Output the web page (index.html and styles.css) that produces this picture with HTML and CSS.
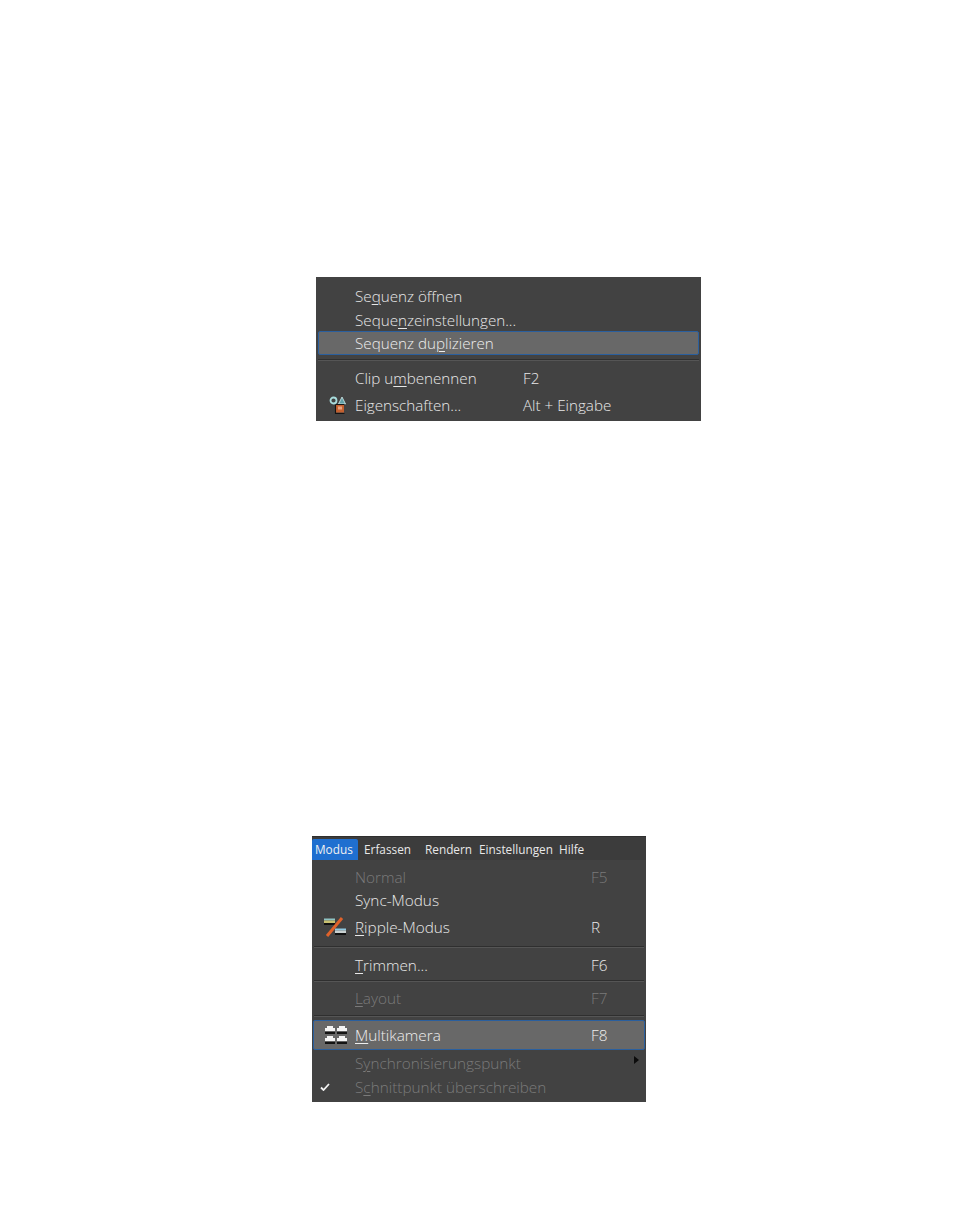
FILE: index.html
```html
<!DOCTYPE html>
<html lang="de">
<head>
<meta charset="utf-8">
<title>Menüs</title>
<link rel="stylesheet" href="styles.css">
</head>
<body>
<div class="page">
  <div class="menu menu-seq">
    <div class="row h24"><span class="ic"></span><span class="lb">Se<u>q</u>uenz öffnen</span></div>
    <div class="row h23"><span class="ic"></span><span class="lb">Seque<u>n</u>zeinstellungen...</span></div>
    <div class="row h24 hot"><span class="ic"></span><span class="lb">Sequenz du<u>p</u>lizieren</span></div>
    <div class="sep s-a"></div>
    <div class="row h27"><span class="ic"></span><span class="lb">Clip u<u>m</u>benennen</span><span class="key">F2</span></div>
    <div class="row h28"><span class="ic">
      <svg class="icon-prop" width="18" height="18" viewBox="0 0 18 18"><circle cx="4.500" cy="4.500" r="3" fill="none" stroke="#a8dcdc" stroke-width="1.800"/><path d="M9.500 8 13 1 16.500 8z" fill="#5f9ea6" stroke="#d6eeee" stroke-width=".8"/><rect x="7" y="9" width="8" height="7.500" fill="#c4602f"/><rect x="9" y="10.500" width="4" height="3" fill="#e9a27e"/><path d="M6.500 8.500h9M6.500 9v8.500h9" fill="none" stroke="#141414" stroke-width="1.100"/></svg>
    </span><span class="lb">Ei<u>g</u>enschaften...</span><span class="key">Alt + Eingabe</span></div>
  </div>

  <div class="menu menu-mode">
    <div class="bar">
      <span class="bar-item active">Modus</span>
      <span class="bar-item erf">Erfassen</span>
      <span class="bar-item ren">Rendern</span>
      <span class="bar-item ein">Einstellungen</span>
      <span class="bar-item hil">Hilfe</span>
    </div>
    <div class="body">
      <div class="row h23 off"><span class="ic"></span><span class="lb">Normal</span><span class="key">F5</span></div>
      <div class="row h23"><span class="ic"></span><span class="lb">Sync-Modus</span></div>
      <div class="row h31"><span class="ic">
        <svg class="icon-rip" width="24" height="20" viewBox="0 0 24 20"><rect x="1" y="1.500" width="11" height="2" fill="#8fc4c4"/><rect x="1" y="3.500" width="11" height="2.500" fill="#c8c070"/><rect x="1" y="6" width="11" height="2" fill="#111"/><rect x="12" y="11.500" width="11" height="2" fill="#8fc8e0"/><rect x="12" y="13.500" width="11" height="2.500" fill="#c8d0d0"/><rect x="12" y="16" width="11" height="2" fill="#111"/><path d="M19 1 4 19" stroke="#e0622a" stroke-width="3"/></svg>
      </span><span class="lb"><u>R</u>ipple-Modus</span><span class="key">R</span></div>
      <div class="sep s-b"></div>
      <div class="row h30"><span class="ic"></span><span class="lb"><u>T</u>rimmen...</span><span class="key">F6</span></div>
      <div class="sep s-c"></div>
      <div class="row h31 off"><span class="ic"></span><span class="lb"><u>L</u>ayout</span><span class="key">F7</span></div>
      <div class="sep s-d"></div>
      <div class="row h30 hot wide"><span class="ic">
        <svg class="icon-cam" width="25" height="20" viewBox="0 0 25 20"><path d="M3 1h6v2H3zM1 3h10v3.500H1z" fill="#f4f4f4"/><rect x="1" y="6.500" width="10" height="2.500" fill="#141414"/><path d="M15 1h6v2h-6zM13 3h10v3.500H13z" fill="#f4f4f4"/><rect x="13" y="6.500" width="10" height="2.500" fill="#141414"/><path d="M3 11h6v2H3zM1 13h10v3.500H1z" fill="#f4f4f4"/><rect x="1" y="16.500" width="10" height="2.500" fill="#141414"/><path d="M15 11h6v2h-6zM13 13h10v3.500H13z" fill="#f4f4f4"/><rect x="13" y="16.500" width="10" height="2.500" fill="#141414"/></svg>
      </span><span class="lb"><u>M</u>ultikamera</span><span class="key">F8</span></div>
      <div class="row h25 off"><span class="ic"></span><span class="lb">S<u>y</u>nchronisierungspunkt</span><span class="sub"></span></div>
      <div class="row h24 off"><span class="ic"><svg class="icon-chk" width="10" height="8" viewBox="0 0 10 8"><path d="M1 4.500 3.500 7 9 1" fill="none" stroke="#f2f2f2" stroke-width="1.800"/></svg></span><span class="lb">S<u>c</u>hnittpunkt überschreiben</span></div>
    </div>
  </div>
</div>
</body>
</html>
```

FILE: styles.css
```css
html, body { margin: 0; padding: 0; background: #fff; }
.page {
  width: 954px;
  height: 1227px;
  padding-top: 277px;
  box-sizing: border-box;
  font-family: "Open Sans", "DejaVu Sans", sans-serif;
  font-weight: 300;
  overflow: hidden;
}
.menu { background: #424242; color: #e8e8e8; font-size: 15.2px; box-sizing: border-box; }
.menu-seq { width: 385px; height: 144px; margin-left: 316px; padding-top: 7px; --key: 168px; --ic: 39px; margin-bottom: 415px; }
.menu-mode { width: 334px; height: 266px; margin-left: 312px; --key: 236px; --ic: 43px; border-top: 1px solid #2e2e2e; font-size: 15.3px; }

.bar { height: 23px; display: flex; align-items: center; background: #3c3c3c; font-size: 11.8px; font-weight: 400; }
.bar-item { line-height: 21px; white-space: nowrap; padding-top: 1px; }
.active { width: 46px; height: 21px; margin-top: 2px; padding: 0 0 0 3px; box-sizing: border-box; background: #1f6fd0; color: #f0f0f0; border-radius: 2px 2px 0 0; }
.erf { margin-left: 6px; width: 61px; }
.ren { width: 54px; }
.ein { width: 80px; }

.body { padding-top: 5px; }
.row { display: flex; align-items: center; box-sizing: border-box; white-space: nowrap; }
.ic { width: var(--ic); height: 100%; flex: none; display: flex; align-items: center; justify-content: center; }
.lb { width: var(--key); flex: none; }
.key { flex: none; }
.h23 { height: 23px; }
.h24 { height: 24px; }
.h25 { height: 25px; }
.h27 { height: 27px; }
.h28 { height: 28px; }
.h30 { height: 30px; }
.h31 { height: 31px; }
u { text-underline-offset: 2px; text-decoration-thickness: 1px; }

.hot { background: #686868; border: 1px solid #2a5f9e; margin: 0 2px; border-radius: 2px; color: #eee; }
.hot .ic { width: 36px; }
.wide { margin: 0 1px; }
.wide .ic { width: 41px; }
.off { color: #7a7a7a; }

.sep { border-top: 1px solid #2f2f2f; border-bottom: 1px solid #555; margin: 0 2px; box-sizing: border-box; }
.s-a { height: 2px; margin-top: 4px; margin-bottom: 3px; }
.s-b { height: 2px; margin-top: 4px; margin-bottom: 2px; }
.s-c { height: 2px; margin-top: 0; margin-bottom: 0; }
.s-d { height: 2px; margin-top: 2px; margin-bottom: 3px; }

.sub { width: 0; height: 0; margin-left: 43px; margin-top: -6px; border-left: 5px solid #0c0c0c; border-top: 4px solid transparent; border-bottom: 4px solid transparent; }
.icon-prop { margin-left: 5px; margin-top: -1px; }
.icon-rip { margin-left: 3px; }
.icon-cam { margin-left: 3px; }
.icon-chk { margin-left: -17px; }
```
